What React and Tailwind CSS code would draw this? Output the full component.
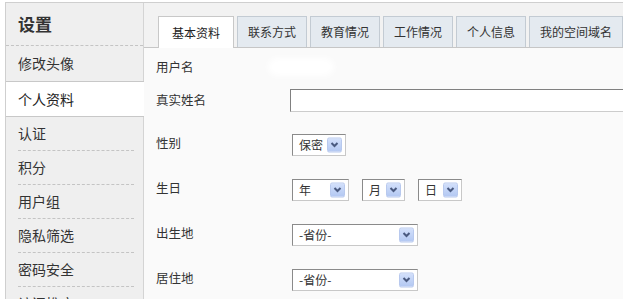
import React from "react";

const font = { fontFamily: '"Noto Sans CJK SC", "Noto Sans", sans-serif' };

function Arrow() {
  return (
    <span className="absolute right-[3px] top-1/2 -translate-y-1/2 w-[15px] h-[15px] rounded-[2px] bg-gradient-to-b from-[#d3e0fb] to-[#b3c8f2] border border-[#b8c9ee] flex items-center justify-center">
      <svg width="9" height="7" viewBox="0 0 9 7">
        <polyline points="1.5,1.5 4.5,4.5 7.5,1.5" fill="none" stroke="#4a5a80" strokeWidth="2" />
      </svg>
    </span>
  );
}

function Select({ text, w }) {
  return (
    <div
      className={`relative shrink-0 h-[22px] bg-white border border-[#c8c8c8] border-t-[#8a8a8a] border-l-[#8a8a8a] text-[12px] text-[#333] flex items-center pl-[6px] ${w}`}
    >
      {text}
      <Arrow />
    </div>
  );
}

export default function App() {
  const items = ["认证", "积分", "用户组", "隐私筛选", "密码安全", "访问推广"];
  const tabs = [
    ["联系方式", "w-[70px]"],
    ["教育情况", "w-[70px]"],
    ["工作情况", "w-[70px]"],
    ["个人信息", "w-[70px]"],
    ["我的空间域名", "w-[94px]"],
  ];
  return (
    <div className="w-[623px] h-[299px] overflow-hidden bg-white pt-[2px] pl-[5px]" style={font}>
      <div className="flex h-[400px] border-t border-l border-[#cfcfcf]">
        {/* sidebar */}
        <div className="w-[137px] shrink-0 bg-[#efefef] flex flex-col">
          <div className="h-[43px] border-b border-dashed border-[#c4c4c4] flex items-center pl-[12px] text-[17px] font-bold text-[#333]">
            设置
          </div>
          <div className="h-[35px] flex items-center pl-[12px] text-[14px] text-[#333]">修改头像</div>
          <div className="h-[36px] bg-white border-y border-[#c8c8c8] flex items-center pl-[12px] text-[14px] text-[#222] mr-[-1px] relative z-10">
            个人资料
          </div>
          {items.map((t) => (
            <div
              key={t}
              className="h-[34px] ml-[12px] mr-[9px] border-b border-dashed border-[#c4c4c4] flex items-center text-[14px] text-[#333]"
            >
              {t}
            </div>
          ))}
        </div>
        {/* main */}
        <div className="flex-1 min-w-0 overflow-hidden border-l border-[#d4d4d4] bg-[#fafafa] flex flex-col">
          <div className="h-[45px] shrink-0 bg-[#f2f2f2] border-b border-[#c6c6c6] flex items-end pl-[14px] gap-[3px]">
            <div className="h-[32px] w-[76px] shrink-0 whitespace-nowrap -mb-px bg-white border border-b-0 border-[#c8c8c8] flex items-center justify-center text-[12px] text-[#222]">
              基本资料
            </div>
            {tabs.map(([t, w]) => (
              <div
                key={t}
                className={`h-[31px] shrink-0 bg-[#e4eaf0] border border-b-0 border-[#c3cbd3] flex items-center justify-center text-[12px] text-[#333] whitespace-nowrap ${w}`}
              >
                {t}
              </div>
            ))}
          </div>
          <div className="pl-[12px] flex flex-col text-[12.5px] text-[#333]">
            <div className="h-[38px] flex items-center">
              <span className="w-[134px] shrink-0">用户名</span>
              <span className="-ml-[22px] w-[66px] h-[18px] bg-white rounded-full blur-[3px]" />
            </div>
            <div className="h-[28px] flex items-center">
              <span className="w-[134px] shrink-0">真实姓名</span>
              <div className="h-[23px] flex-1 bg-white border border-[#cccccc] border-t-[#808080] border-l-[#808080] border-r-0" />
            </div>
            <div className="h-[45px] mt-[8px] flex items-center">
              <span className="w-[136px] shrink-0 -mt-[3px]">性别</span>
              <Select text="保密" w="w-[54px]" />
            </div>
            <div className="h-[45px] flex items-center">
              <span className="w-[136px] shrink-0 -mt-[3px]">生日</span>
              <div className="flex gap-[13px]">
                <Select text="年" w="w-[57px]" />
                <Select text="月" w="w-[43px]" />
                <Select text="日" w="w-[44px]" />
              </div>
            </div>
            <div className="h-[45px] flex items-center">
              <span className="w-[136px] shrink-0 -mt-[3px]">出生地</span>
              <Select text="-省份-" w="w-[126px]" />
            </div>
            <div className="h-[45px] flex items-center">
              <span className="w-[136px] shrink-0 -mt-[3px]">居住地</span>
              <Select text="-省份-" w="w-[126px]" />
            </div>
          </div>
        </div>
      </div>
    </div>
  );
}
